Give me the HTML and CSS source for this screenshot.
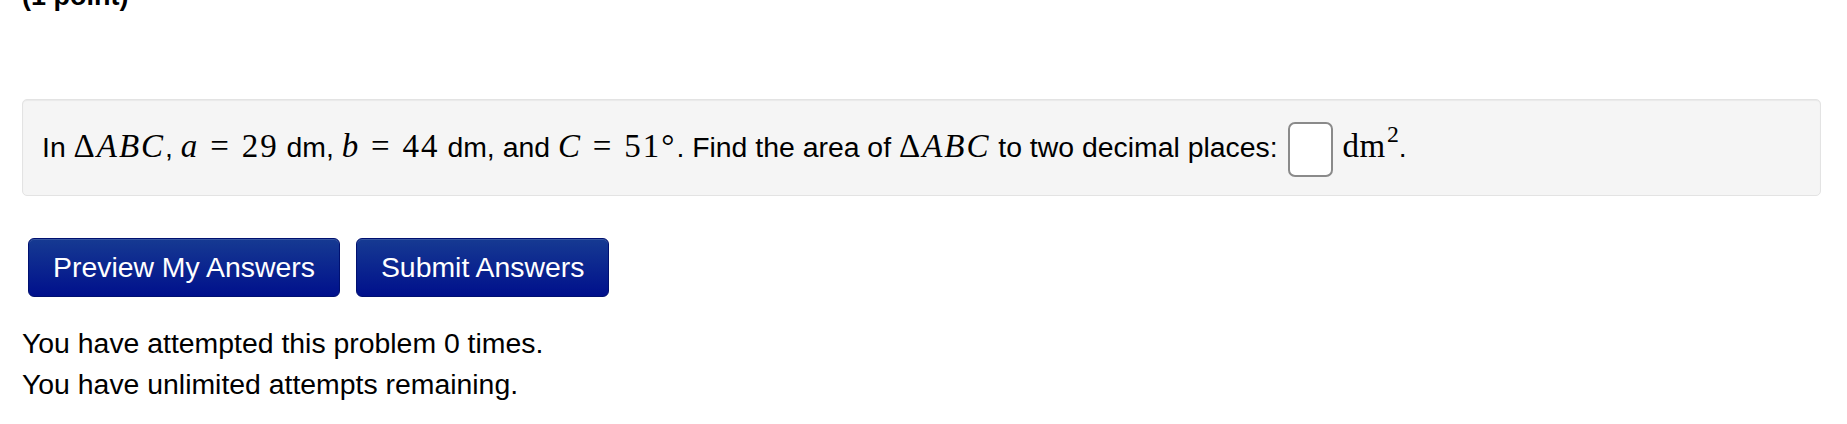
FILE: index.html
```html
<!DOCTYPE html>
<html>
<head>
<meta charset="utf-8">
<link rel="stylesheet" href="styles.css">
</head>
<body>
<div class="page">
  <div class="points">(1 point)</div>
  <div class="well">
    <p class="problem">In <span class="m">Δ<i>ABC</i></span>, <span class="m"><i>a</i><span class="rel">=</span>29</span> dm, <span class="m"><i>b</i><span class="rel">=</span>44</span> dm, and <span class="m"><i>C</i><span class="rel">=</span>51°</span>. Find the area of <span class="m">Δ<i>ABC</i></span> to two decimal places: <input class="ans" type="text"> <span class="m unit">dm<sup>2</sup></span>.</p>
  </div>
  <div class="buttons">
    <button class="btn">Preview My Answers</button>
    <button class="btn">Submit Answers</button>
  </div>
  <div class="status">
    <p>You have attempted this problem 0 times.</p>
    <p>You have unlimited attempts remaining.</p>
  </div>
</div>
</body>
</html>
```
FILE: styles.css
```css
html, body {
  margin: 0;
  padding: 0;
  background: #ffffff;
}
body {
  font-family: "Liberation Sans", Arial, sans-serif;
  font-size: 28.4px;
  color: #000;
}
.page {
  padding: 0 26px 0 22px;
}
.points {
  font-weight: bold;
  font-size: 27px;
  line-height: 32px;
  margin-top: -20px;
}
.well {
  margin-top: 87px;
  background: #f5f5f5;
  border: 1px solid #e3e3e3;
  border-radius: 5px;
  box-shadow: inset 0 1px 1px rgba(0,0,0,0.05);
  padding: 18px 19px;
}
.problem {
  margin: 0;
  line-height: 56px;
  white-space: nowrap;
}
.m {
  font-family: "Liberation Serif", "Times New Roman", serif;
  font-size: 33px;
  letter-spacing: 0.06em;
}
.m i {
  font-style: italic;
}
.rel {
  margin: 0 0.33em;
}
.unit {
  letter-spacing: 0.02em;
}
.m sup {
  font-size: 0.72em;
  vertical-align: 0;
  position: relative;
  top: -0.65em;
  margin-left: 1px;
  letter-spacing: 0;
}
.ans {
  box-sizing: border-box;
  width: 45px;
  height: 55px;
  vertical-align: middle;
  border: 2px solid #8a8a8a;
  border-radius: 7px;
  background: #fff;
  margin: 0 2px;
  padding: 0;
}
.buttons {
  margin-top: 42px;
  padding-left: 6px;
  display: flex;
  gap: 16px;
}
.btn {
  font-family: "Liberation Sans", Arial, sans-serif;
  font-size: 28.4px;
  color: #fff;
  height: 59px;
  padding: 0 24px;
  border: 1px solid #001070;
  border-radius: 6px;
  background: linear-gradient(#163a92, #00108c);
  box-shadow: inset 0 1px 0 rgba(255,255,255,0.15);
}
.status {
  margin-top: 26px;
}
.status p {
  margin: 0;
  line-height: 41px;
}
```
